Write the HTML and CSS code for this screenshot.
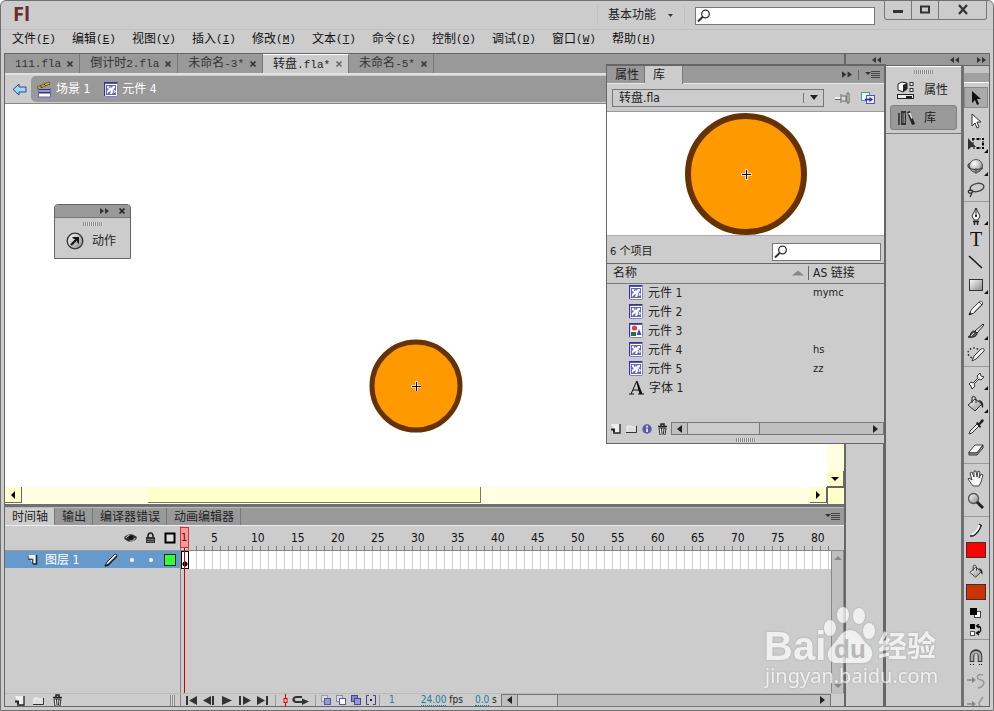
FILE: index.html
```html
<!DOCTYPE html>
<html lang="zh-CN">
<head>
<meta charset="utf-8">
<title>Fl</title>
<link rel="stylesheet" href="styles.css">
</head>
<body>
<svg class="defs" aria-hidden="true">
  <defs>
    <linearGradient id="g-shade" x1="0" y1="0" x2="1" y2="1"><stop offset="0" stop-color="#fff"/><stop offset="1" stop-color="#888"/></linearGradient>
    <radialGradient id="g-ball" cx=".35" cy=".3" r=".8"><stop offset="0" stop-color="#fff"/><stop offset=".6" stop-color="#bbb"/><stop offset="1" stop-color="#555"/></radialGradient>
    <symbol id="clip" viewBox="0 0 14 15"><rect x=".5" y="1.5" width="13" height="13" rx="1" fill="#fff" stroke="#8080c0"/><path d="M.5 14V.8h13" fill="none" stroke="#33339a" stroke-width="1.4"/><rect x="2" y="3" width="10" height="10" fill="#6666b8"/><path d="M3 4h3l1 2 2-2h2v2l-2 1 3 2-1 2-2-1-1 2H6l1-3-2 1-2 2V9l2-2-2-1z" fill="#fff"/><path d="M5 4l1 2M9 8l1 2" stroke="#6666b8"/></symbol>
    <symbol id="graphic" viewBox="0 0 14 15"><rect x=".5" y="1.5" width="13" height="13" rx="1" fill="#fff" stroke="#8080c0"/><path d="M.5 14V.8h13" fill="none" stroke="#33339a" stroke-width="1.4"/><circle cx="5.5" cy="5" r="2.6" fill="#d43"/><rect x="2" y="9" width="5" height="4" fill="#276a4c"/><path d="M7.500 12l2.500-6 2.500 6z" fill="#44b"/></symbol>
    <symbol id="search" viewBox="0 0 14 14"><circle cx="8.500" cy="5" r="3.800" fill="#fff" stroke="#333" stroke-width="1.300"/><path d="M5.800 7.800L1 12.500" stroke="#333" stroke-width="2"/></symbol>
    <symbol id="close" viewBox="0 0 8 8"><path d="M1.500 1.500l5 5M6.500 1.500l-5 5" stroke="currentColor" stroke-width="1.600"/></symbol>
    <symbol id="fwd" viewBox="0 0 9 6"><path d="M0 0l4 3-4 3zM5 0l4 3-4 3z" fill="#333"/></symbol>
    <symbol id="rew" viewBox="0 0 9 6"><path d="M4 0L0 3l4 3zM9 0L5 3l4 3z" fill="#333"/></symbol>
    <symbol id="options" viewBox="0 0 15 9"><path d="M0 2h6L3 5z" fill="#333"/><path d="M6 1.500h9M6 3.500h9M6 5.500h9M6 7.500h9" stroke="#444"/></symbol>
    <symbol id="new" viewBox="0 0 11 11"><path d="M1 1h9v9H5z" fill="#eee"/><path d="M1 6.500h3V9" fill="none" stroke="#222" stroke-width="2"/><path d="M10 1v9H3" fill="none" stroke="#222" stroke-width="1.300"/></symbol>
    <symbol id="folder" viewBox="0 0 11 11"><path d="M1 3h4l1 1h4v5H1z" fill="#ddd"/><path d="M1 9V3h4l1 1h3" fill="none" stroke="#f4f4f4"/><path d="M0 9.500h10.500V3" fill="none" stroke="#333"/></symbol>
    <symbol id="trash" viewBox="0 0 11 12"><path d="M1 3.500h9M4 3V1h3v2" fill="none" stroke="#222" stroke-width="1.500"/><path d="M2 5h7l-1 7H3z" fill="#eee" stroke="#333"/><path d="M4.500 5l.5 6M7 5l-.5 6" stroke="#222"/></symbol>
    <symbol id="pencil" viewBox="0 0 18 18"><path d="M2 16l2-5 8-8c2-2 5 0 3 3l-8 8z" fill="#f4f4f4" stroke="#444"/><path d="M2 16l1-3 2 2z" fill="#111"/><path d="M7 13l7-7" stroke="#999"/><path d="M12 3l3 3" stroke="#333"/></symbol>
    <symbol id="bucket" viewBox="0 0 18 18"><path d="M1 10l7-6 7 5-7 7z" fill="url(#g-shade)" stroke="#333"/><path d="M5 8V3c0-3 4-2 4 2v3" fill="none" stroke="#222"/><path d="M11 5c4 0 6 3 5 8-2-1-1-4-3-6z" fill="#222"/></symbol>
    <symbol id="more" viewBox="0 0 4 4"><path d="M4 0v4H0z" fill="#111"/></symbol>
  </defs>
</svg>

<div class="app">
  <header class="titlebar">
    <div class="logo">Fl</div>
    <div class="workspace">
      <select aria-label="工作区"><option>基本功能</option></select>
      <svg width="5" height="3"><path d="M0 0h5L2.500 3z" fill="#333"/></svg>
    </div>
    <label class="search search-top"><svg width="14" height="14"><use href="#search"/></svg><input type="text" aria-label="搜索帮助"></label>
    <div class="winbtns">
      <button aria-label="最小化"><svg width="12" height="12"><rect x="1" y="6" width="10" height="3" fill="#333"/></svg></button>
      <button aria-label="最大化"><svg width="12" height="12"><rect x="2" y="2.500" width="8" height="6" fill="none" stroke="#333" stroke-width="2"/></svg></button>
      <button class="wide" aria-label="关闭"><svg width="12" height="12"><path d="M2 1l8 9M10 1L2 10" stroke="#333" stroke-width="2.200"/></svg></button>
    </div>
  </header>

  <nav class="menubar">
    <button>文件<span class="lat">(<u>F</u>)</span></button>
    <button>编辑<span class="lat">(<u>E</u>)</span></button>
    <button>视图<span class="lat">(<u>V</u>)</span></button>
    <button>插入<span class="lat">(<u>I</u>)</span></button>
    <button>修改<span class="lat">(<u>M</u>)</span></button>
    <button>文本<span class="lat">(<u>T</u>)</span></button>
    <button>命令<span class="lat">(<u>C</u>)</span></button>
    <button>控制<span class="lat">(<u>O</u>)</span></button>
    <button>调试<span class="lat">(<u>D</u>)</span></button>
    <button>窗口<span class="lat">(<u>W</u>)</span></button>
    <button>帮助<span class="lat">(<u>H</u>)</span></button>
  </nav>

  <main class="work">
    <section class="doc">
      <div class="doctabs">
        <button><span class="lat">111.fla</span><svg width="8" height="8"><use href="#close"/></svg></button>
        <button><span>倒计时<span class="lat">2.fla</span></span><svg width="8" height="8"><use href="#close"/></svg></button>
        <button><span>未命名<span class="lat">-3*</span></span><svg width="8" height="8"><use href="#close"/></svg></button>
        <button class="on"><span>转盘<span class="lat">.fla*</span></span><svg width="8" height="8"><use href="#close"/></svg></button>
        <button><span>未命名<span class="lat">-5*</span></span><svg width="8" height="8"><use href="#close"/></svg></button>
      </div>
      <div class="crumbs">
        <button class="back" aria-label="返回"><svg width="15" height="13"><path d="M1 6.500L7 1v3h7v5H7v3z" fill="#9ed8ff" stroke="#2b4a86"/></svg></button>
        <div class="path">
          <a href="#"><svg width="15" height="17"><path d="M0 6L12 1l1 2L1 8z" fill="#d8c020" stroke="#554c00" stroke-width=".8"/><path d="M3 4l2 3M7 3l2 2" stroke="#333"/><rect x="1" y="7" width="13" height="9" fill="#fff"/><path d="M1 8.500h13M1 11.500h13" stroke="#33337f" stroke-width="2"/><path d="M1.500 7v9h12V7" fill="none" stroke="#6666b8"/></svg>场景 1</a>
          <a href="#"><svg width="14" height="15"><use href="#clip"/></svg>元件 4</a>
        </div>
      </div>

      <div class="stage">
        <div class="canvas">
          <svg class="disc" width="94" height="94"><circle cx="47" cy="47" r="44" fill="#ff9900" stroke="#663300" stroke-width="5"/><path d="M42 47.500h10M47.500 42v10" stroke="#fff" stroke-width="3" stroke-opacity=".7"/><path d="M43 47.500h9M47.500 43v9" stroke="#000"/></svg>
          <section class="actions">
            <div class="actions-head"><svg width="9" height="6"><use href="#fwd"/></svg><svg width="8" height="8"><use href="#close"/></svg></div>
            <div class="grip"></div>
            <button><svg width="18" height="18"><circle cx="9" cy="9" r="7.800" fill="url(#g-shade)" stroke="#333" stroke-width="1.300"/><path d="M5 13l7-7" stroke="#111" stroke-width="2.200"/><path d="M6 5h7v7l-2-2V7H8z" fill="#111"/></svg>动作</button>
          </section>
        </div>
        <div class="vbar"><span class="vbar-btn"><svg width="8" height="4"><path d="M0 0h8L4 4z"/></svg></span></div>
        <div class="hbar">
          <span class="hbar-btn"><svg width="4" height="8"><path d="M4 0v8L0 4z"/></svg></span>
          <span class="hbar-space"></span><span class="hbar-thumb"></span><span class="hbar-rest"></span>
          <span class="hbar-btn"><svg width="4" height="8"><path d="M0 0v8l4-4z"/></svg></span>
        </div>
        <div class="corner"></div>
      </div>

      <section class="timeline">
        <div class="tltabs">
          <button class="on">时间轴</button><button>输出</button><button>编译器错误</button><button>动画编辑器</button>
          <svg class="opts" width="15" height="9"><use href="#options"/></svg>
        </div>
        <div class="tlbody">
          <div class="layers">
            <div class="layerhead">
              <svg width="13" height="10"><path d="M0 5C3 0 10 0 13 5 10 10 3 10 0 5z" fill="#333"/><path d="M2 5c1-2 3-3 4-2M11 5c-1 3-3 3-5 3" stroke="#ddd" fill="none"/><circle cx="7" cy="4.500" r="2.300" fill="#111"/></svg>
              <svg width="11" height="12"><path d="M3 6V4c0-4 5-4 5 0v2" fill="none" stroke="#222" stroke-width="1.600"/><rect x="1" y="5" width="9" height="6" fill="#333"/><path d="M2 7.500h7M2 9.500h7" stroke="#777"/></svg>
              <svg width="12" height="12"><rect x="1.500" y="1.500" width="9" height="9" fill="#ddd" stroke="#000" stroke-width="2"/></svg>
            </div>
            <div class="layer">
              <svg width="11" height="11"><path d="M1 1h8v9H6z" fill="#eee"/><path d="M1 1v4h5v5" fill="none" stroke="#777"/><path d="M1 5.500h4.500V10" fill="none" stroke="#444"/><path d="M9.500 1v9H6" fill="none" stroke="#222" stroke-width="1.500"/></svg>
              <span class="layername">图层 1</span>
              <svg width="14" height="14"><path d="M1 13l2-4 7-7c2-2 4 0 2 2l-7 7z" fill="#eee" stroke="#222"/><path d="M1 13l3-1 9-9" stroke="#111" stroke-width="1.500" fill="none"/></svg>
              <i class="dot"></i><i class="dot"></i><i class="outline"></i>
            </div>
          </div>
          <div class="frames">
            <div class="ruler"><span>5</span><span>10</span><span>15</span><span>20</span><span>25</span><span>30</span><span>35</span><span>40</span><span>45</span><span>50</span><span>55</span><span>60</span><span>65</span><span>70</span><span>75</span><span>80</span></div>
            <div class="framearea">
              <div class="track"><i class="key"></i></div>
              <div class="tlv"><svg width="8" height="4"><path d="M0 4h8L4 0z" fill="#888"/></svg><svg width="8" height="4"><path d="M0 0h8L4 4z" fill="#888"/></svg></div>
            </div>
            <div class="playhead"><span>1</span></div>
          </div>
        </div>
        <div class="tlfoot">
          <div class="footleft">
            <button aria-label="新建图层"><svg width="11" height="11"><use href="#new"/></svg></button>
            <button aria-label="新建文件夹"><svg width="11" height="11"><use href="#folder"/></svg></button>
            <button aria-label="删除"><svg width="11" height="12"><use href="#trash"/></svg></button>
            <i class="vgrip"></i>
          </div>
          <div class="play">
            <button aria-label="第一帧"><svg width="12" height="9"><path d="M1 0h2v9H1zM12 0v9L4 4.500z" fill="#333"/></svg></button>
            <button aria-label="后退一帧"><svg width="12" height="9"><path d="M8 0v9L0 4.500zM9 0h2v9H9z" fill="#333"/></svg></button>
            <button aria-label="播放"><svg width="12" height="9"><path d="M1 0v9l10-4.500z" fill="#333"/></svg></button>
            <button aria-label="前进一帧"><svg width="12" height="9"><path d="M0 0h2v9H0zM4 0v9l8-4.500z" fill="#333"/></svg></button>
            <button aria-label="最后一帧"><svg width="12" height="9"><path d="M0 0v9l8-4.500zM9 0h2v9H9z" fill="#333"/></svg></button>
          </div>
          <div class="seg">
            <svg width="5" height="13"><path d="M2.500 0v13" stroke="#d00"/><rect x="1" y="4.500" width="3" height="4" fill="#fcc" stroke="#d00"/></svg>
            <svg width="17" height="10"><path d="M11 7H4c-4-1-3-5 1-5h5" fill="none" stroke="#333" stroke-width="2.200"/><path d="M10 3.500v6.500l7-3.500z" fill="#333"/></svg>
          </div>
          <div class="seg onion">
            <svg width="10" height="10"><rect x=".5" y=".5" width="6" height="6" fill="#ddd" stroke="#99b"/><rect x="3.500" y="3.500" width="6" height="6" fill="#99c" stroke="#55a"/></svg>
            <svg width="10" height="10"><rect x=".5" y=".5" width="6" height="6" fill="#ddd" stroke="#88a"/><rect x="3.500" y="3.500" width="6" height="6" fill="#fff" stroke="#55a"/></svg>
            <svg width="10" height="10"><rect x=".5" y=".5" width="6" height="6" fill="#88b" stroke="#449"/><rect x="3.500" y="3.500" width="6" height="6" fill="#99c" stroke="#449"/></svg>
            <svg width="10" height="10"><path d="M3 .5H.5v9H3M7 .5h2.500v9H7" fill="none" stroke="#447"/><path d="M4 5h2" stroke="#224" stroke-width="2"/></svg>
          </div>
          <div class="seg nums"><span class="hot n1">1</span><span><span class="hot">24.00</span> fps</span><span><span class="hot">0.0</span> s</span></div>
          <div class="hs tlh"><i class="hs-btn"><svg width="5" height="8"><path d="M5 0v8L0 4z" fill="#222"/></svg></i><i class="hs-thumb"></i><i class="hs-btn last"><svg width="5" height="8"><path d="M0 0v8l5-4z" fill="#222"/></svg></i></div>
        </div>
      </section>
    </section>

    <section class="docks">
      <div class="dockhead"><span class="dh1"><svg width="9" height="6"><use href="#rew"/></svg></span><span class="dh2"><svg width="9" height="6"><use href="#rew"/></svg></span><span class="dh3"><svg width="9" height="6"><use href="#fwd"/></svg></span></div>
      <div class="dockcols">
        <div class="dock1"></div>
        <div class="dock2">
          <div class="dockgroup">
            <div class="grip"></div>
            <button><svg width="18" height="18"><path d="M1 3l4-2 5 1v6l-4 3-5-2z" fill="#fff" stroke="#222"/><path d="M6 4l4-2v6l-4 3z" fill="#222"/><rect x="13" y="1.500" width="3" height="3" fill="#eee" stroke="#333"/><rect x="13" y="7.500" width="3" height="3" fill="#eee" stroke="#333"/><rect x=".5" y="13.500" width="16" height="4" fill="#eee" stroke="#222"/><path d="M9 16h6" stroke="#222" stroke-width="2"/></svg>属性</button>
            <button class="on"><svg width="18" height="16"><path d="M1 3h2v12H1z" fill="#444"/><path d="M4 1h5v14H4z" fill="#333"/><path d="M5 3h3v10H5z" fill="#888"/><path d="M6 3v10" stroke="#333"/><path d="M10 2l3-1 5 13-3 1z" fill="#222"/><path d="M11.500 4l1.500-.5 2 5" stroke="#eee" fill="none" stroke-width="1.500"/></svg>库</button>
          </div>
        </div>
        <div class="tools">
          <div class="toolgrip"></div>
          <div class="tg t1">
            <button class="on" aria-label="选择"><svg width="18" height="18"><path d="M5 2v12l3-3 2 5 2-1-2-5h4z" fill="#111"/></svg></button>
            <button aria-label="部分选取"><svg width="18" height="18"><path d="M5 2v12l3-3 2 5 2-1-2-5h4z" fill="#fff" stroke="#333"/></svg></button>
            <button aria-label="任意变形"><svg width="18" height="18"><rect x="6" y="4" width="10" height="9" fill="none" stroke="#111" stroke-dasharray="2 1"/><path d="M5 3h2v2H5zM10 3h2v2h-2zM15 3h2v2h-2zM15 8h2v2h-2zM15 12h2v2h-2zM10 12h2v2h-2z"/><path d="M1 3v12l3-3h5z" fill="#333"/></svg><svg class="m" width="4" height="4"><use href="#more"/></svg></button>
            <button aria-label="3D 旋转"><svg width="18" height="18"><circle cx="9" cy="8" r="6.500" fill="url(#g-ball)" stroke="#555"/><path d="M3 5c-6 4 2 9 13 5" fill="none" stroke="#444" stroke-width="1.300"/><path d="M9 10v6" stroke="#555"/></svg><svg class="m" width="4" height="4"><use href="#more"/></svg></button>
            <button aria-label="套索"><svg width="18" height="18"><ellipse cx="10" cy="6.500" rx="7" ry="4" fill="none" stroke="#444" stroke-width="1.400" transform="rotate(-12 10 6.500)"/><path d="M4 9c-4 0-3 4 0 3s2-3-1-3M5 12l-2 4" fill="none" stroke="#333" stroke-width="1.300"/></svg></button>
          </div>
          <div class="tg t2">
            <button aria-label="钢笔"><svg width="18" height="18"><path d="M9 1l4 8-2 4H7L5 9z" fill="#f4f4f4" stroke="#333"/><path d="M9 1v8" stroke="#222"/><circle cx="9" cy="9" r="1"/><path d="M6 14.500h6M7.500 15v3M10.500 15v3" stroke="#222" stroke-width="1.500"/></svg><svg class="m" width="4" height="4"><use href="#more"/></svg></button>
            <button class="type" aria-label="文本">T</button>
            <button aria-label="线条"><svg width="18" height="18"><path d="M2 3l13 12" stroke="#111" stroke-width="1.400"/></svg></button>
            <button aria-label="矩形"><svg width="18" height="18"><rect x="2.500" y="3.500" width="13" height="11" fill="url(#g-shade)" stroke="#333"/></svg><svg class="m" width="4" height="4"><use href="#more"/></svg></button>
            <button aria-label="铅笔"><svg width="18" height="18"><use href="#pencil"/></svg></button>
            <button aria-label="刷子"><svg width="18" height="18"><path d="M8 9l8-7 1 1-7 8z" fill="#eee" stroke="#222"/><path d="M1 15c3 0 2-6 6-6l3 2c0 4-5 5-9 4z" fill="#555" stroke="#222"/><path d="M4 14l3-3" stroke="#ddd"/></svg><svg class="m" width="4" height="4"><use href="#more"/></svg></button>
            <button aria-label="Deco"><svg width="18" height="18"><ellipse cx="7" cy="8" rx="6" ry="5" fill="none" stroke="#222" stroke-width="1.500" stroke-dasharray="1.500 2"/><path d="M5 16l2-5 7-7c2-1 4 0 3 2l-8 8z" fill="#eee" stroke="#333"/></svg></button>
          </div>
          <div class="tg t3">
            <button aria-label="骨骼"><svg width="18" height="18"><path d="M2 12l2-2 2 1 5-5-1-2 3-3 1 3 3 1-3 3-2-1-5 5 1 2-3 3-1-3z" fill="#f4f4f4" stroke="#333"/></svg><svg class="m" width="4" height="4"><use href="#more"/></svg></button>
            <button aria-label="颜料桶"><svg width="18" height="18"><use href="#bucket"/></svg><svg class="m" width="4" height="4"><use href="#more"/></svg></button>
            <button aria-label="滴管"><svg width="18" height="18"><path d="M2 16l1-3 7-7 2 2-7 7z" fill="#eee" stroke="#333"/><path d="M9 5l1-1 2 1 2-3c2-2 4 1 2 2l-3 3 1 2-1 1z" fill="#222"/></svg></button>
            <button aria-label="橡皮擦"><svg width="18" height="18"><path d="M2 11l6-7h8l-6 8H2z" fill="#f4f4f4" stroke="#444"/><path d="M2 11v3h8l6-7V4l-6 8H2" fill="#aaa" stroke="#333"/></svg></button>
          </div>
          <div class="tg t4">
            <button aria-label="手形"><svg width="18" height="18"><path d="M6 17l-5-7 1-1 3 2-2-7 2-1 2 5V2h2l1 6 1-6 2 1-1 6 2-4 2 1-2 7-2 4z" fill="#f8f8f8" stroke="#444"/></svg></button>
            <button aria-label="缩放"><svg width="18" height="18"><circle cx="6.500" cy="6.500" r="5" fill="url(#g-shade)" stroke="#555" stroke-width="1.300"/><path d="M10 10l6 6" stroke="#222" stroke-width="3"/></svg></button>
          </div>
          <div class="tg t5">
            <button aria-label="笔触颜色"><svg width="14" height="14"><path d="M1 12h3c5-3 6-6 8-9l-2-2c-1 4-3 7-6 9z" fill="#f8f8f8"/><path d="M1 13h3c5-3 7-7 8-10M10 1l3 2" stroke="#222" fill="none" stroke-width="1.300"/></svg></button>
            <button class="sw stroke" aria-label="笔触"></button>
            <button class="mid" aria-label="填充颜色"><svg width="15" height="15" viewBox="0 0 18 18"><use href="#bucket"/></svg></button>
            <button class="sw fill" aria-label="填充"></button>
            <button class="sm" aria-label="黑白"><svg width="14" height="12"><rect x="5.500" y="4.500" width="6" height="6" fill="#fff" stroke="#444"/><rect x="1" y="1" width="7" height="7"/></svg></button>
            <button class="sm" aria-label="交换颜色"><svg width="14" height="12"><rect x="1" y="0" width="5" height="5"/><rect x="1.500" y="7.500" width="4" height="4" fill="#fff" stroke="#555"/><path d="M8 2c5 0 5 7 0 7M10 0L7.500 2 10 4M10 7L7.500 9 10 11" stroke="#111" fill="none" stroke-width="1.300"/></svg></button>
          </div>
          <div class="tg t6">
            <button aria-label="贴紧至对象"><svg width="16" height="18"><path d="M4 13V7c0-6 8-6 8 0v6" fill="none" stroke="#333" stroke-width="4.500"/><path d="M4 12V7c0-5 8-5 8 0v5" fill="none" stroke="#aaa" stroke-width="2.500"/><path d="M2 15.500h1m2 0h1m5 0h1m1 0h1" stroke="#111"/></svg></button>
            <button aria-label="平滑"><svg width="18" height="18"><path d="M0 8h6" stroke="#888" stroke-width="1.500"/><path d="M5 5v6l4-3z" fill="#888"/><path d="M16 3c-7-2-7 4-2 5s3 7-3 8" fill="none" stroke="#999" stroke-width="1.500"/></svg></button>
            <button aria-label="伸直"><svg width="18" height="18"><path d="M0 9h6" stroke="#888" stroke-width="1.500"/><path d="M5 6v6l4-3z" fill="#888"/><path d="M16 2l-4 6 2 8" fill="none" stroke="#999" stroke-width="1.500"/></svg></button>
          </div>
        </div>
      </div>
    </section>

    <section class="library">
      <div class="libtabs"><button>属性</button><button class="on">库</button><span class="libctl"><svg width="10" height="7" viewBox="0 0 9 6"><use href="#fwd"/></svg><i></i><svg width="15" height="9"><use href="#options"/></svg></span></div>
      <div class="libdoc">
        <div class="combo"><select aria-label="库文档"><option>转盘.fla</option></select><svg width="8" height="5"><path d="M0 0h8L4 5z" fill="#222"/></svg></div>
        <button aria-label="固定当前库"><svg width="15" height="12"><path d="M0 6h6" stroke="#eee" stroke-width="2"/><path d="M0 7.500h6M6 2v9M7 4h4v5H7M12 1v10h2V1z" stroke="#666" fill="#ddd"/></svg></button>
        <button aria-label="新建库面板"><svg width="15" height="12"><rect x=".5" y=".5" width="8" height="8" fill="#e8f8f8" stroke="#4a9a9a"/><rect x="5.500" y="3.500" width="8" height="8" fill="#eef" stroke="#55a"/><path d="M4 7.500h5" stroke="#22c" stroke-width="1.500"/><path d="M8.500 5v5l3.500-2.500z" fill="#22c"/></svg></button>
      </div>
      <div class="preview"><svg width="122" height="122"><circle cx="61" cy="61" r="58" fill="#ff9900" stroke="#663300" stroke-width="6"/><path d="M56 61.500h11M61.500 56v11" stroke="#fff" stroke-width="3" stroke-opacity=".7"/><path d="M57 61.500h9M61.500 57v9" stroke="#000"/></svg></div>
      <div class="libcount"><span>6 个项目</span><label class="search"><svg width="14" height="14"><use href="#search"/></svg><input type="text" aria-label="搜索库"></label></div>
      <div class="liblist">
        <table>
          <thead><tr><th><span>名称<svg width="12" height="6"><path d="M0 5.500h12L6 .500z" fill="#888"/></svg></span></th><th>AS 链接</th></tr></thead>
          <tbody>
            <tr><td><svg width="14" height="15"><use href="#clip"/></svg>元件 1</td><td>mymc</td></tr>
            <tr><td><svg width="14" height="15"><use href="#clip"/></svg>元件 2</td><td></td></tr>
            <tr><td><svg width="14" height="15"><use href="#graphic"/></svg>元件 3</td><td></td></tr>
            <tr><td><svg width="14" height="15"><use href="#clip"/></svg>元件 4</td><td>hs</td></tr>
            <tr><td><svg width="14" height="15"><use href="#clip"/></svg>元件 5</td><td>zz</td></tr>
            <tr><td><svg width="15" height="15"><path d="M0 14h5M9 14h6M2 14L7.500 1.500 M4 10h6" stroke="#111" fill="none"/><path d="M7 1h1.500L13.500 14h-3z" fill="#111"/></svg>字体 1</td><td></td></tr>
          </tbody>
        </table>
      </div>
      <div class="libfoot">
        <button aria-label="新建元件"><svg width="11" height="11"><use href="#new"/></svg></button>
        <button aria-label="新建文件夹"><svg width="11" height="11"><use href="#folder"/></svg></button>
        <button aria-label="属性"><svg width="10" height="10"><circle cx="5" cy="5" r="4.700" fill="#5a5aa8"/><path d="M5 4.500V8M5 1.800v1.600" stroke="#fff" stroke-width="1.600"/></svg></button>
        <button aria-label="删除"><svg width="11" height="12"><use href="#trash"/></svg></button>
        <div class="hs"><i class="hs-btn"><svg width="5" height="8"><path d="M5 0v8L0 4z" fill="#222"/></svg></i><i class="hs-thumb wide"></i><i class="hs-btn last"><svg width="5" height="8"><path d="M0 0v8l5-4z" fill="#222"/></svg></i></div>
      </div>
      <div class="grip bottom"></div>
    </section>
  </main>

  <svg class="mark" width="180" height="90" aria-hidden="true">
    <g class="mark-ink">
      <text class="mk-b" x="0" y="56">Bai</text>
      <ellipse cx="66" cy="24" rx="6" ry="8"/><ellipse cx="79" cy="11" rx="6" ry="8"/><ellipse cx="95" cy="12" rx="6" ry="8"/><ellipse cx="105" cy="27" rx="6" ry="8"/>
      <path d="M86 26c9 0 11 9 18 15 8 7 4 18-5 18H73c-10 0-12-11-5-17 6-6 9-16 18-16z"/>
      <text class="mk-c" x="114" y="53">经验</text>
      <text class="mk-u" x="1" y="79">jingyan.baidu.com</text>
    </g>
    <text class="mk-d" x="70" y="54">du</text>
  </svg>
</div>
</body>
</html>
```

FILE: styles.css
```css
* { box-sizing: border-box; }
html, body { height: 100%; margin: 0; }
body {
  background: #fff;
  color: #222;
  font: 12px/16px "DejaVu Sans Condensed", "Noto Sans CJK SC", sans-serif;
  overflow: hidden;
}
.defs { position: absolute; width: 0; height: 0; }
svg { display: block; flex: none; }
button, select, input { font: inherit; color: inherit; border: 0; padding: 0; margin: 0; background: none; border-radius: 0; outline: 0; }
button { display: flex; align-items: center; white-space: nowrap; }
select { appearance: none; }
.lat { font-family: "Liberation Mono", monospace; font-size: 11px; }

.app {
  position: relative;
  display: flex;
  flex-direction: column;
  height: 100vh;
  background: #ccc;
  border: 1px solid #707070;
  border-radius: 6px 6px 0 0;
}

/* title bar */
.titlebar { display: flex; align-items: flex-start; height: 29px; padding: 0 6px 0 12px; border-bottom: 1px solid #c0c0c0; }
.logo { margin-right: auto; padding-top: 3px; font: bold 20px/20px "Open Sans", sans-serif; color: #6a2c30; }
.workspace { display: flex; align-items: center; gap: 10px; width: 88px; height: 20px; margin-top: 4px; padding-left: 10px; border: solid #c0c0c0; border-width: 0 1px; }
.workspace select { width: 50px; height: 20px; color: #222; }
.search { display: flex; align-items: center; gap: 2px; height: 18px; padding: 1px; background: #fff; border: 1px solid #777; }
.search input { flex: 1; min-width: 0; height: 14px; }
.search-top { width: 180px; margin: 6px 9px 0 10px; }
.winbtns { display: flex; height: 19px; border: 1px solid #777; border-top: 0; border-radius: 0 0 3px 3px; }
.winbtns button { width: 27px; justify-content: center; border-right: 1px solid #777; }
.winbtns .wide { width: 47px; border-right: 0; }

.menubar { display: flex; height: 23px; padding-left: 11px; color: #111; }
.menubar button { width: 60px; height: 18px; }

/* work area */
.work { position: relative; display: flex; flex: 1; min-height: 0; margin: 0 3px 3px; border: 1px solid #666; }
.doc { display: flex; flex-direction: column; flex: 1; min-width: 0; }
.doctabs { display: flex; height: 19px; background: #999; color: #333; }
.doctabs button { gap: 5px; padding: 0 5px 0 10px; border-right: 1px solid #777; }
.doctabs .on { background: #ccc; border-top: 1px solid #fff; color: #222; }
.doctabs .on svg { color: #666; }
.crumbs { display: flex; align-items: center; height: 31px; border-top: 2px solid #e0e0e0; border-bottom: 1px solid #888; }
.back { width: 26px; padding-left: 7px; }
.path { display: flex; align-items: center; gap: 14px; flex: 1; height: 26px; padding-left: 6px; background: #999; border-radius: 5px 0 0 5px; }
.path a { display: flex; align-items: center; gap: 4px; color: #fff; text-decoration: none; }

.stage { display: grid; grid-template: 1fr 17px / 1fr 17px; flex: 1; min-height: 0; background: #fff; }
.canvas { position: relative; }
.disc { position: absolute; left: 364px; top: 235px; }
.vbar { display: flex; align-items: flex-end; background: #ffffe0; }
.vbar-btn, .hbar-btn { display: flex; align-items: center; justify-content: center; width: 17px; height: 16px; background: #ffc; border-right: 1px solid #666; border-bottom: 1px solid #666; }
.hbar { display: flex; background: #ffffe4; }
.hbar-space { flex: 126 1 0; }
.hbar-thumb { flex: 333 1 0; height: 16px; background: #ffc; border: solid #777; border-width: 0 1px 1px 0; }
.hbar-rest { flex: 329 1 0; }
.corner { background: #ffc; border-left: 1px solid #666; border-top: 1px solid #666; }

.grip { width: 20px; height: 4px; margin: 4px auto; background: repeating-linear-gradient(90deg, #888 0 1px, #ddd 1px 2px); }
.actions { position: absolute; left: 49px; top: 100px; width: 77px; height: 55px; background: #ccc; border: 1px solid #666; border-radius: 4px 4px 0 0; }
.actions-head { display: flex; align-items: center; justify-content: flex-end; gap: 9px; height: 13px; padding-right: 4px; background: #999; border-bottom: 1px solid #777; border-radius: 3px 3px 0 0; color: #222; }
.actions button { gap: 8px; height: 22px; padding-left: 11px; }

/* timeline */
.timeline { display: flex; flex-direction: column; height: 202px; border-top: 3px solid #707070; }
.tltabs { display: flex; height: 19px; background: #999; border-top: 1px solid #bbb; border-bottom: 1px solid #eee; }
.tltabs button { padding: 0 6px 0 7px; border-right: 1px solid #777; color: #222; }
.tltabs .on { background: #ccc; }
.opts { margin: 4px 4px 0 auto; }
.tlbody { display: flex; flex: 1; min-height: 0; }
.layers { width: 176px; border-right: 1px solid #888; }
.layerhead { display: flex; align-items: center; justify-content: flex-end; gap: 8px; height: 24px; padding-right: 4px; }
.layer { display: flex; align-items: center; height: 18px; padding: 0 4px 0 22px; background: #69c; border-top: 1px solid #999; color: #fff; }
.layername { flex: 1; padding-left: 7px; }
.dot { width: 4px; height: 4px; margin-left: 15px; border-radius: 50%; background: #fff; }
.layer svg + .dot { margin-left: 12px; }
.outline { width: 12px; height: 12px; margin-left: 11px; background: #3f3; border: 1px solid #222; }
.frames { position: relative; display: flex; flex-direction: column; flex: 1; min-width: 0; }
.ruler {
  display: flex;
  align-items: center;
  height: 24px;
  padding-left: 30px;
  overflow: hidden;
  color: #111;
  background: repeating-linear-gradient(90deg, transparent 0 7px, #777 7px 8px) 0 100% / 652px 4px no-repeat;
}
.ruler span { flex: none; width: 40px; }
.framearea { display: flex; flex: 1; border-top: 1px solid #888; }
.track { flex: 1; height: 18px; background: repeating-linear-gradient(90deg, #fff 0 7px, #ccc 7px 8px); }
.key { display: block; width: 8px; height: 18px; border: 1px solid #000; background: radial-gradient(circle at 3px 12px, #000 0 2px, transparent 3px); }
.tlv { display: flex; flex-direction: column; align-items: center; justify-content: space-between; width: 13px; padding: 5px 0; background: #bfbfbf; border: 1px solid #888; border-width: 0 1px; }
.playhead { position: absolute; left: -1px; top: 1px; bottom: 0; width: 9px; background: linear-gradient(#c00, #c00) 4px 0 / 1px 100% no-repeat; }
.playhead span { display: block; height: 21px; background: #f99; border: 1px solid #c33; color: #511; font-size: 11px; line-height: 20px; }
.tlfoot { display: flex; align-items: center; height: 13px; border-top: 1px solid #bbb; color: #222; font-size: 10px; line-height: 12px; }
.footleft { display: flex; align-items: center; gap: 8px; width: 176px; padding-left: 9px; border-right: 1px solid #888; }
.vgrip { width: 5px; height: 11px; margin: 0 5px 0 auto; background: repeating-linear-gradient(90deg, #888 0 1px, #ddd 1px 2px); }
.play { display: flex; gap: 6px; padding-left: 4px; }
.seg { display: flex; align-items: center; gap: 4px; height: 11px; margin-left: 6px; padding-left: 7px; border-left: 1px solid #999; }
.onion { gap: 5px; padding-left: 5px; }
.onion + .seg { margin-left: 3px; }
.hot { color: #17809f; border-bottom: 1px dotted #17809f; }
.nums { gap: 12px; width: 122px; padding-left: 9px; white-space: nowrap; }
.n1 { margin-right: 14px; }
.hs { display: flex; flex: 1; height: 13px; background: #bfbfbf; border: 1px solid #777; }
.tlh { margin-right: 13px; }
.hs-btn { display: flex; align-items: center; justify-content: center; width: 15px; }
.hs-thumb { width: 41px; background: #ccc; border: 1px solid #777; border-width: 0 1px; }
.hs-thumb.wide { width: 73px; }
.last { margin-left: auto; }

/* docked panels */
.docks { display: flex; flex-direction: column; width: 145px; border-left: 2px solid #666; }
.dockhead { display: flex; height: 12px; background: #999; border-bottom: 1px solid #666; }
.dockhead span { display: flex; align-items: center; justify-content: flex-end; }
.dh1 { width: 35px; }
.dh2 { width: 78px; }
.dh3 { width: 27px; }
.dockcols { display: flex; flex: 1; min-height: 0; }
.dock1 { width: 40px; border-right: 3px solid #666; }
.dock2 { flex: 1; border-right: 3px solid #707070; }
.dockgroup { height: 68px; padding: 0 4px; border-top: 1px solid #fff; border-bottom: 1px solid #777; }
.dockgroup .grip { margin: 3px auto; }
.dockgroup button { width: 100%; height: 25px; gap: 9px; padding-left: 7px; margin-bottom: 3px; }
.dockgroup .on { background: #999; border: 1px solid #808080; border-radius: 3px; padding-left: 6px; }
.tools { width: 25px; overflow: hidden; }
.toolgrip { height: 17px; background: linear-gradient(#c4c4c4 7px, #a0a0a0 7px); border-bottom: 1px solid #fff; }
.tg { border-bottom: 1px solid #999; }
.t1 { padding-top: 4px; }
.t2 { padding: 2px 0 1px; }
.t3 { padding: 2px 0; }
.t4 { padding: 2px 0 4px; }
.tg button { position: relative; width: 24px; height: 23px; justify-content: center; }
.tg .on { height: 21px; margin-bottom: 1px; background: #aaa; border: 1px solid #888; }
.m { position: absolute; right: 0; bottom: 2px; }
.tg .type { font: 20px/22px "Liberation Serif", serif; color: #111; }
.t5 { padding: 1px 0; }
.t5 button { height: 24px; }
.t5 .sw { height: 16px; width: 20px; margin-left: 2px; border: 1px solid #333; }
.stroke { background: #f00; }
.fill { background: #c30; }
.t5 .mid { height: 26px; }
.t5 .sm { height: 17px; }
.t5 .fill { margin-bottom: 4px; }
.t6 { padding: 6px 0; border: 0; }

/* library panel */
.library { position: absolute; right: 103px; top: 10px; width: 280px; background: #ccc; border: 1px solid #666; border-top-width: 2px; border-right-width: 2px; color: #222; }
.libtabs { display: flex; height: 18px; background: #999; border-bottom: 1px solid #e8e8e8; }
.libtabs button { width: 38px; padding-left: 8px; border-right: 1px solid #777; }
.libtabs .on { background: #ccc; height: 18px; }
.libctl { display: flex; align-items: center; gap: 6px; margin-left: auto; padding-right: 4px; }
.libctl i { width: 1px; height: 10px; background: #666; }
.libdoc { display: flex; align-items: center; gap: 11px; height: 28px; padding: 0 8px 0 5px; border-bottom: 1px solid #999; }
.combo { display: flex; align-items: center; flex: 1; height: 18px; padding-right: 5px; border: 1px solid #777; }
.combo select { flex: 1; height: 16px; padding-left: 6px; margin-right: 6px; line-height: 16px; background: linear-gradient(#777, #777) 100% 50% / 1px 10px no-repeat; }
.preview { display: flex; align-items: flex-end; justify-content: center; height: 123px; background: #fff; }
.libcount { display: flex; align-items: center; justify-content: space-between; height: 28px; padding: 4px 3px 0; border-top: 1px solid #aaa; font-size: 11px; }
.libcount .search { width: 109px; }
.liblist { height: 159px; border-top: 1px solid #666; }
table { width: 100%; border-collapse: collapse; table-layout: fixed; }
th { height: 19px; padding: 0; border-bottom: 1px solid #777; font-weight: normal; text-align: left; line-height: 16px; }
th:first-child { width: 202px; padding-left: 6px; }
th span { display: flex; align-items: center; justify-content: space-between; padding-right: 4px; border-right: 1px solid #666; line-height: 14px; }
td { height: 19px; padding: 0; line-height: 18px; font-size: 11px; }
td:first-child { padding-left: 22px; font-size: 12px; }
th + th, td + td { padding-left: 4px; }
td svg { display: inline-block; vertical-align: -3px; margin-right: 5px; }
.libfoot { display: flex; align-items: center; gap: 5px; height: 13px; padding-left: 3px; }
.libfoot .hs { margin-left: -2px; }
.grip.bottom { margin: 3px auto 1px; }

/* watermark */
.mark { position: absolute; right: 49px; bottom: 16px; pointer-events: none; }
.mark-ink { fill: #fff; opacity: .72; filter: drop-shadow(0 0 1px #999); }
.mk-b { font: bold 40px "Liberation Sans", sans-serif; }
.mk-c { font: bold 29px "Noto Sans CJK SC", sans-serif; }
.mk-u { font: 20px "Noto Sans", sans-serif; }
.mk-d { font: bold 26px "Liberation Sans", sans-serif; fill: #b8b8b8; }
```
